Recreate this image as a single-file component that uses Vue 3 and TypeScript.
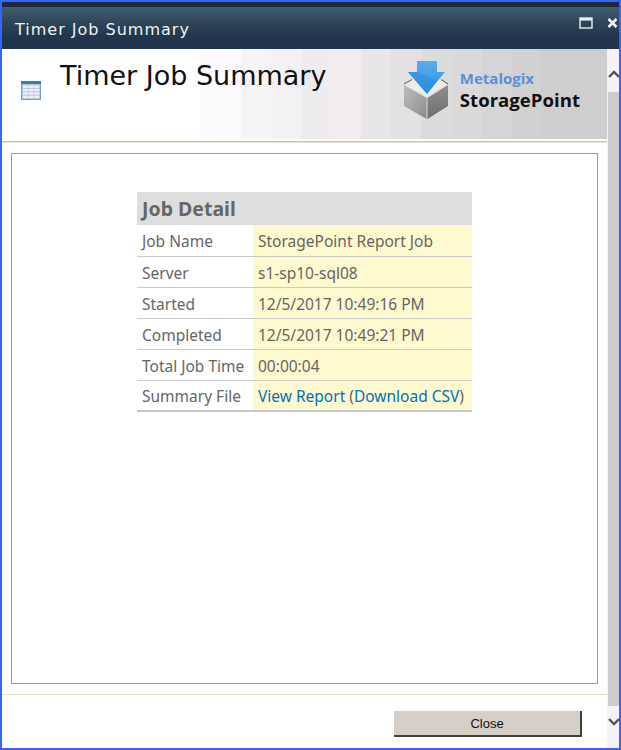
<template>
  <div class="frame">
    <div class="top-strip"></div>
    <header class="titlebar">
      <span class="titlebar-text">Timer Job Summary</span>
      <div class="window-btns">
        <svg width="14" height="14" viewBox="0 0 14 14">
          <rect x="1" y="2" width="12" height="10" fill="none" stroke="#e8edf0" stroke-width="1.4" />
          <rect x="1" y="2" width="12" height="2.6" fill="#e8edf0" />
        </svg>
        <svg width="14" height="14" viewBox="0 0 14 14">
          <path d="M2.500 3 L10.500 11 M10.500 3 L2.500 11" stroke="#f2f4f6" stroke-width="2.6" fill="none" />
        </svg>
      </div>
    </header>

    <div class="body">
      <div class="main">
        <div class="banner">
          <svg class="page-icon" width="20" height="19" viewBox="0 0 20 19">
            <rect x="0.5" y="0.5" width="19" height="18" fill="#b4c6de" stroke="#7f9cc4" />
            <rect x="0" y="0" width="20" height="3" fill="#3f74c8" />
            <g fill="#eef2f8">
              <rect v-for="c in iconCells" :key="c.k" :x="c.x" :y="c.y" width="5" height="2.4" />
            </g>
          </svg>
          <h1 class="page-title">Timer Job Summary</h1>
          <div class="logo">
            <svg width="46" height="60" viewBox="0 0 46 60">
              <defs>
                <linearGradient id="faceLeft" x1="0" y1="0" x2="1" y2="1">
                  <stop offset="0" stop-color="#bdbdbd" />
                  <stop offset="1" stop-color="#8c8c8c" />
                </linearGradient>
                <linearGradient id="faceRight" x1="0" y1="0" x2="0" y2="1">
                  <stop offset="0" stop-color="#8f8f8f" />
                  <stop offset="1" stop-color="#6f6f6f" />
                </linearGradient>
                <linearGradient id="arrowFill" x1="0" y1="0" x2="0" y2="1">
                  <stop offset="0" stop-color="#58aeea" />
                  <stop offset="1" stop-color="#2f93e0" />
                </linearGradient>
              </defs>
              <path d="M1 23 L24 10 L45 23 L24 36 Z" fill="#ececec" />
              <path d="M1 24 L23.500 37 L23.500 58 L1 45 Z" fill="url(#faceLeft)" />
              <path d="M24.500 37 L45 24 L45 45 L24.500 58 Z" fill="url(#faceRight)" />
              <path d="M1 23 L9 18.500 M45 23 L38 18.500" stroke="#555" stroke-width="1" fill="none" />
              <path d="M14 0 H34 V11 H42 L24 33 L5 11 H14 Z" fill="url(#arrowFill)" />
              <path d="M14 11 H5 L24 33 L34 20 Z" fill="#2a8cdf" opacity="0.55" />
            </svg>
            <div class="logo-text">
              <span class="logo-top">Metalogix</span>
              <span class="logo-bottom">StoragePoint</span>
            </div>
          </div>
        </div>
        <div class="rule-top"></div>

        <section class="panel">
          <table class="detail">
            <thead>
              <tr><th colspan="2">Job Detail</th></tr>
            </thead>
            <tbody>
              <tr v-for="row in rows" :key="row.label">
                <td class="label">{{ row.label }}</td>
                <td class="value">{{ row.value }}</td>
              </tr>
              <tr>
                <td class="label">Summary File</td>
                <td class="value"><a href="#">View Report</a> (<a href="#">Download CSV</a>)</td>
              </tr>
            </tbody>
          </table>
        </section>

        <div class="rule-bottom"></div>
        <div class="footer">
          <button class="close-btn" type="button">Close</button>
        </div>
      </div>

      <div class="scrollbar">
        <div class="arrow">
          <svg width="12" height="10" viewBox="0 0 12 10"><path d="M2 8 L7 3 L12 8" fill="none" stroke="#555" stroke-width="2.4" /></svg>
        </div>
        <div class="thumb"></div>
        <div class="arrow arrow-down">
          <svg width="12" height="10" viewBox="0 0 12 10"><path d="M2 2 L7 7 L12 2" fill="none" stroke="#555" stroke-width="2.4" /></svg>
        </div>
      </div>
    </div>
  </div>
</template>

<script setup lang="ts">
interface Row {
  label: string;
  value: string;
}

const rows: Row[] = [
  { label: 'Job Name', value: 'StoragePoint Report Job' },
  { label: 'Server', value: 's1-sp10-sql08' },
  { label: 'Started', value: '12/5/2017 10:49:16 PM' },
  { label: 'Completed', value: '12/5/2017 10:49:21 PM' },
  { label: 'Total Job Time', value: '00:00:04' },
];

const iconCells: { k: string; x: number; y: number }[] = [];
for (let r = 0; r < 4; r++) {
  for (let c = 0; c < 3; c++) {
    iconCells.push({ k: `${r}-${c}`, x: 2 + c * 5.6, y: 4.5 + r * 3.4 });
  }
}
</script>

<style scoped>
.frame {
  box-sizing: border-box;
  width: 621px;
  height: 750px;
  border: 2px solid #3366ff;
  display: flex;
  flex-direction: column;
  background: #fff;
  overflow: hidden;
}

.top-strip {
  height: 5px;
  background: #1b2b40;
  border-bottom: 1px solid #0f6aa8;
  flex: none;
}

.titlebar {
  height: 41px;
  flex: none;
  display: flex;
  align-items: center;
  justify-content: space-between;
  padding-left: 13px;
  background: linear-gradient(#435a6c 0%, #2e4659 35%, #21354c 70%, #21344b 100%);
}

.titlebar-text {
  font-family: "DejaVu Sans", sans-serif;
  font-size: 16px;
  letter-spacing: 1px;
  color: #eef1f3;
  margin-top: 1px;
}

.window-btns {
  display: flex;
  align-self: flex-start;
  gap: 13px;
  margin-top: 8px;
  margin-right: -1px;
}

.body {
  flex: 1;
  display: flex;
  min-height: 0;
}

.main {
  flex: 1;
  min-width: 0;
  display: flex;
  flex-direction: column;
}

.banner {
  height: 90px;
  flex: none;
  display: flex;
  background: linear-gradient(90deg,
    #fff 0 198px,
    #fdfbfd 198px 239px,
    #f5f5f5 239px 269px,
    #f4f1f4 269px 299px,
    #eeecee 299px 329px,
    #f0ecf0 329px 359px,
    #e7e7e7 359px 389px,
    #e3e1e3 389px 419px,
    #dddcdd 419px 449px,
    #dbdadb 449px 479px,
    #d6d5d6 479px 509px,
    #d2d1d2 509px 539px,
    #cfcecf 539px 605px);
}

.page-icon {
  margin: 32px 0 0 19px;
  flex: none;
}

.page-title {
  margin: 10px 0 0 19px;
  font-family: "DejaVu Sans", sans-serif;
  font-weight: normal;
  font-size: 27px;
  line-height: 34px;
  color: #111;
}

.logo {
  margin: 12px 0 0 auto;
  padding-right: 27px;
  display: flex;
  gap: 11px;
}

.logo-text {
  display: flex;
  flex-direction: column;
  padding-top: 7px;
}

.logo-top {
  font-family: "Open Sans", sans-serif;
  font-weight: 700;
  font-size: 15px;
  line-height: 20px;
  color: #5b8fd6;
}

.logo-bottom {
  font-family: "Open Sans", sans-serif;
  font-weight: 700;
  font-size: 18.600px;
  line-height: 23px;
  color: #111;
}

.rule-top {
  flex: none;
  height: 1px;
  margin-top: 2px;
  background: #c8c6a8;
  box-shadow: 0 1px 0 #e4e3d4;
}

.panel {
  flex: 1;
  margin: 11px 9px 10px 9px;
  border: 1px solid #85a0b0;
  padding-top: 38px;
  min-height: 0;
}

.detail {
  width: 335px;
  margin-left: 125px;
  border-collapse: collapse;
  font-family: "Noto Sans", sans-serif;
  font-size: 15.500px;
  color: #666;
}

.detail th {
  height: 33px;
  padding: 0 5px;
  text-align: left;
  font-size: 19.500px;
  font-weight: 700;
  background: #dedede;
}

.detail td {
  height: 31px;
  padding: 2px 5px 0;
  box-sizing: border-box;
  border-bottom: 1px solid #c9c9c9;
  white-space: nowrap;
}

.detail td.label {
  width: 116px;
}

.detail td.value {
  background: #fff9d0;
}

.detail tr:last-child td {
  border-bottom: 2px solid #c9c9c9;
}

.detail a {
  color: #0072bc;
  text-decoration: none;
}

.rule-bottom {
  flex: none;
  height: 1px;
  background: #e3dfc8;
}

.footer {
  flex: none;
  height: 53px;
  display: flex;
  justify-content: flex-end;
  align-items: flex-start;
  padding: 16px 25px 0 0;
  box-sizing: border-box;
}

.close-btn {
  width: 188px;
  height: 26px;
  padding: 0;
  background: #d4d0c8;
  border: none;
  border-right: 2px solid #404040;
  border-bottom: 2px solid #404040;
  font-family: "Liberation Sans", sans-serif;
  font-size: 13px;
  color: #111;
}

.scrollbar {
  width: 12px;
  flex: none;
  display: flex;
  flex-direction: column;
  background: #f5f2f7;
}

.arrow {
  height: 43px;
  flex: none;
  padding-top: 20px;
  box-sizing: border-box;
  overflow: hidden;
}

.arrow svg {
  display: block;
}

.arrow-down {
  height: 42px;
  padding-top: 11px;
}

.thumb {
  flex: 1;
  margin-left: 1px;
  background: #cccccc;
}
</style>
